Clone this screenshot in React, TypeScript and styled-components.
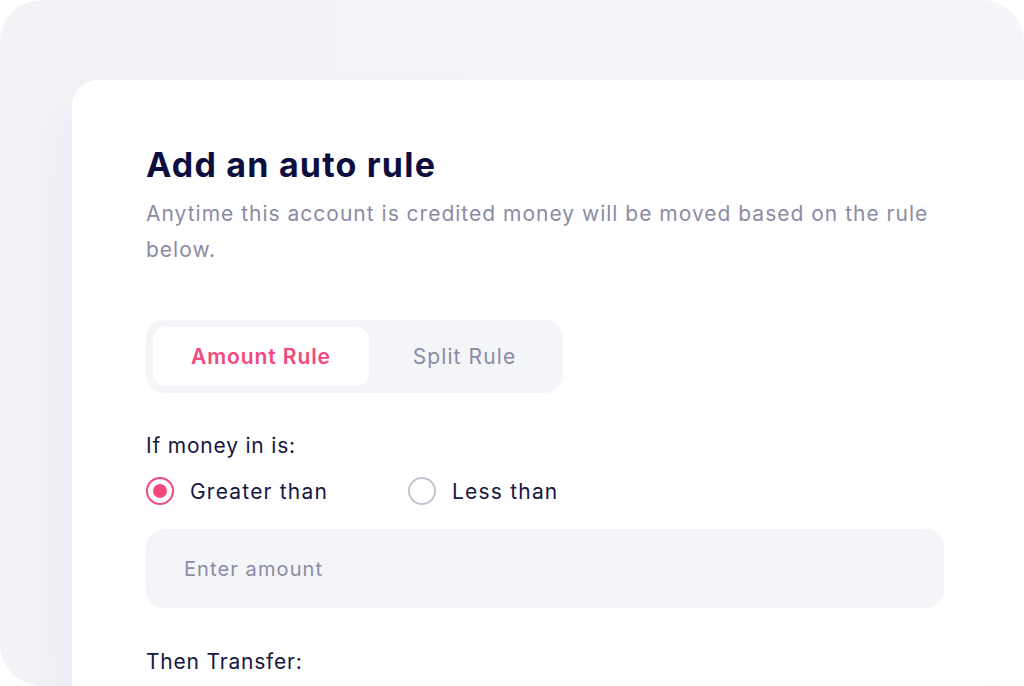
import React, { useState } from "react";
import styled, { createGlobalStyle } from "styled-components";

const Global = createGlobalStyle`
  html, body { margin: 0; padding: 0; background: #ffffff; }
  body { font-family: "Inter", "Noto Sans", sans-serif; }
  * { box-sizing: border-box; }
`;

const Frame = styled.div`
  width: 1024px;
  height: 686px;
  overflow: hidden;
  border-radius: 42px;
  background: linear-gradient(90deg, #f2f3f7 0%, #f4f5f9 100%);
  display: flex;
  padding: 80px 0 0 72px;
`;

const Card = styled.div`
  flex: 1;
  background: #ffffff;
  border-radius: 26px 0 0 0;
  box-shadow: -14px 30px 50px rgba(40, 44, 90, 0.045);
  padding: 64px 0 0 74px;
  display: flex;
  flex-direction: column;
`;

const Title = styled.h1`
  margin: 0;
  font-size: 34px;
  line-height: 42px;
  font-weight: 700;
  color: #0c0e3f;
  letter-spacing: 1.2px;
`;

const Subtitle = styled.p`
  margin: 10px 0 0;
  width: 800px;
  font-size: 21px;
  line-height: 36px;
  color: #8b8ba4;
  letter-spacing: 1px;
`;

const Tabs = styled.div`
  margin-top: 52px;
  width: 417px;
  height: 73px;
  border-radius: 18px;
  background: #f4f5f9;
  padding: 7px;
  display: grid;
  grid-template-columns: 216px 1fr;
`;

const Tab = styled.button<{ $active?: boolean }>`
  border: none;
  border-radius: 13px;
  font-family: inherit;
  font-size: 21px;
  letter-spacing: ${(p) => (p.$active ? 0.9 : 1.1)}px;
  font-weight: ${(p) => (p.$active ? 600 : 400)};
  color: ${(p) => (p.$active ? "#f2497d" : "#8b8ba4")};
  background: ${(p) => (p.$active ? "#ffffff" : "transparent")};
  padding: 0 0 0 ${(p) => (p.$active ? 0 : 4)}px;
  cursor: pointer;
`;

const FieldLabel = styled.div<{ $top: number }>`
  margin-top: ${(p) => p.$top}px;
  font-size: 21px;
  line-height: 28px;
  letter-spacing: 0.8px;
  color: #15173f;
`;

const RadioRow = styled.div`
  margin-top: 17px;
  display: flex;
  align-items: center;
`;

const RadioOption = styled.label`
  display: flex;
  align-items: center;
  gap: 16px;
  width: 262px;
  font-size: 21px;
  letter-spacing: 1.2px;
  color: #15173f;
  cursor: pointer;
`;

const RadioCircle = styled.span<{ $checked?: boolean }>`
  flex: none;
  width: 28px;
  height: 28px;
  border-radius: 50%;
  border: 2.5px solid ${(p) => (p.$checked ? "#f2497d" : "#c4c4d2")};
  display: flex;
  align-items: center;
  justify-content: center;
  &::after {
    content: "";
    width: 14px;
    height: 14px;
    border-radius: 50%;
    background: ${(p) => (p.$checked ? "#f2497d" : "transparent")};
  }
`;

const Input = styled.input`
  margin-top: 24px;
  width: 798px;
  height: 79px;
  border: none;
  outline: none;
  border-radius: 18px;
  background: #f4f5f9;
  padding: 0 38px;
  font-family: inherit;
  font-size: 20px;
  letter-spacing: 1.1px;
  color: #15173f;
  &::placeholder { color: #8b8ba4; }
`;

export default function App() {
  const [tab, setTab] = useState(0);
  const [cmp, setCmp] = useState(0);
  return (
    <>
      <Global />
      <Frame>
        <Card>
          <Title>Add an auto rule</Title>
          <Subtitle>
            Anytime this account is credited money will be moved based on the rule below.
          </Subtitle>
          <Tabs>
            <Tab $active={tab === 0} onClick={() => setTab(0)}>Amount Rule</Tab>
            <Tab $active={tab === 1} onClick={() => setTab(1)}>Split Rule</Tab>
          </Tabs>
          <FieldLabel $top={39}>If money in is:</FieldLabel>
          <RadioRow>
            <RadioOption onClick={() => setCmp(0)}>
              <RadioCircle $checked={cmp === 0} />
              Greater than
            </RadioOption>
            <RadioOption onClick={() => setCmp(1)}>
              <RadioCircle $checked={cmp === 1} />
              Less than
            </RadioOption>
          </RadioRow>
          <Input placeholder="Enter amount" />
          <FieldLabel $top={40}>Then Transfer:</FieldLabel>
        </Card>
      </Frame>
    </>
  );
}
